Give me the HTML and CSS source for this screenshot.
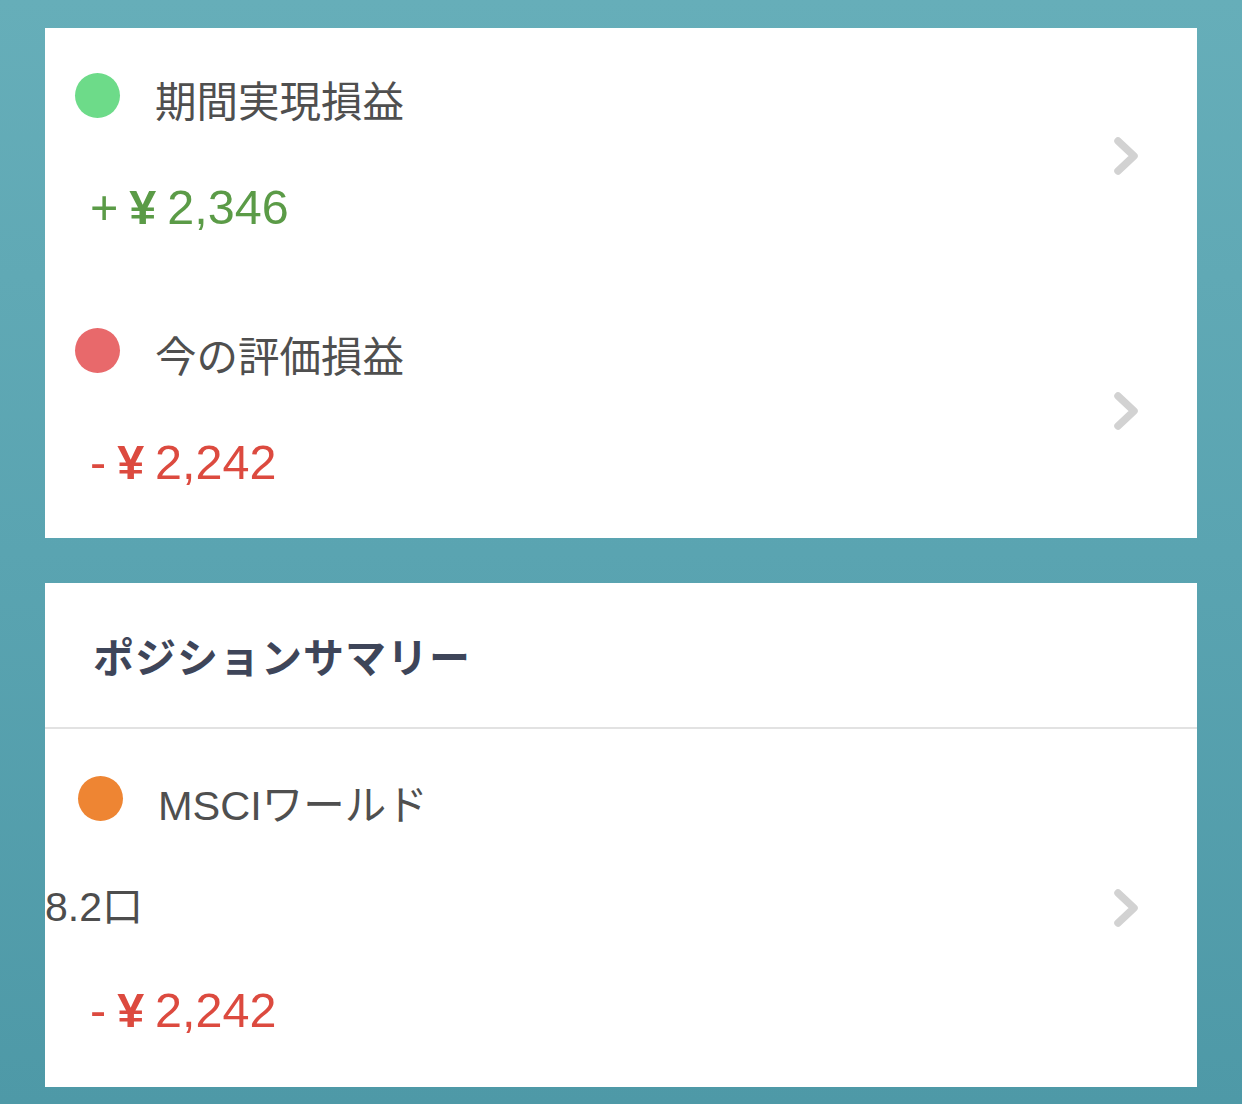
FILE: index.html
```html
<!DOCTYPE html>
<html lang="ja">
<head>
<meta charset="utf-8">
<title>損益</title>
<link rel="stylesheet" href="styles.css">
</head>
<body>
<main class="page">
  <section class="card">
    <a class="row pl-row">
      <div class="info">
        <div class="title-line">
          <span class="dot dot-green"></span>
          <span class="label">期間実現損益</span>
        </div>
        <div class="amount amount-plus">+ <span class="yen">¥</span> 2,346</div>
      </div>
      <svg class="chev" viewBox="0 0 26 38" width="26" height="38"><path d="M4 4 L20 19 L4 34" /></svg>
    </a>
    <a class="row pl-row">
      <div class="info">
        <div class="title-line">
          <span class="dot dot-red"></span>
          <span class="label">今の評価損益</span>
        </div>
        <div class="amount amount-minus">- <span class="yen">¥</span> 2,242</div>
      </div>
      <svg class="chev" viewBox="0 0 26 38" width="26" height="38"><path d="M4 4 L20 19 L4 34" /></svg>
    </a>
  </section>

  <section class="card">
    <h2 class="card-head">ポジションサマリー</h2>
    <a class="row pos-row">
      <div class="info">
        <div class="title-line pos-title">
          <span class="dot dot-orange"></span>
          <span class="label">MSCIワールド</span>
        </div>
        <div class="qty">8.2口</div>
        <div class="amount amount-minus pos-amount">- <span class="yen">¥</span> 2,242</div>
      </div>
      <svg class="chev" viewBox="0 0 26 38" width="26" height="38"><path d="M4 4 L20 19 L4 34" /></svg>
    </a>
  </section>
</main>
</body>
</html>
```

FILE: styles.css
```css
html, body {
  margin: 0;
  padding: 0;
}

body {
  width: 1242px;
  height: 1104px;
  overflow: hidden;
  background: linear-gradient(180deg, #66aeb9 0%, #5aa4b1 50%, #4e99a7 100%);
  font-family: "Liberation Sans", "Noto Sans CJK JP", sans-serif;
  color: #4d4d4d;
}

.page {
  display: flex;
  flex-direction: column;
  gap: 45px;
  padding: 28px 45px 0;
}

.card {
  background: #ffffff;
  display: flex;
  flex-direction: column;
}

.row {
  display: flex;
  align-items: center;
  justify-content: space-between;
  padding-right: 57px;
  color: inherit;
  text-decoration: none;
}

.pl-row {
  height: 255px;
  padding-left: 30px;
}

.info {
  display: flex;
  flex-direction: column;
  align-self: stretch;
  padding-top: 45px;
}

.title-line {
  display: flex;
  align-items: center;
  height: 45px;
}

.dot {
  flex: 0 0 45px;
  width: 45px;
  height: 45px;
  border-radius: 50%;
}

.dot-green { background: #6ddb89; }
.dot-red { background: #e8696b; }
.dot-orange { background: #ee8533; }

.label {
  margin-left: 35px;
  font-size: 41.5px;
  line-height: 45px;
  padding-top: 14px;
  color: #4f4f4f;
  white-space: nowrap;
}

.amount {
  margin-top: 59px;
  padding-left: 15px;
  font-size: 48.5px;
  line-height: 60px;
  word-spacing: -2.5px;
  white-space: nowrap;
}

.amount-plus { color: #5b9b47; }
.amount-minus { color: #dc4a3f; }

.yen {
  font-weight: 700;
}

.chev {
  flex: 0 0 26px;
}

.chev path {
  fill: none;
  stroke: #d2d2d2;
  stroke-width: 7.5;
  stroke-linecap: round;
  stroke-linejoin: round;
}

.card-head {
  margin: 0;
  height: 144px;
  display: flex;
  align-items: center;
  padding-left: 48px;
  font-family: "Noto Sans CJK JP", sans-serif;
  font-size: 41px;
  letter-spacing: 1px;
  font-weight: 700;
  color: #3e4559;
  border-bottom: 2px solid #e2e2e2;
}

.pos-row {
  height: 358px;
  padding-left: 0;
}

.pos-row .info {
  padding-top: 47px;
}

.pos-title {
  padding-left: 33px;
}

.qty {
  margin-top: 61px;
  font-size: 41px;
  line-height: 50px;
  color: #4d4d4d;
}

.pos-amount {
  margin-top: 48px;
  padding-left: 45px;
}
```
